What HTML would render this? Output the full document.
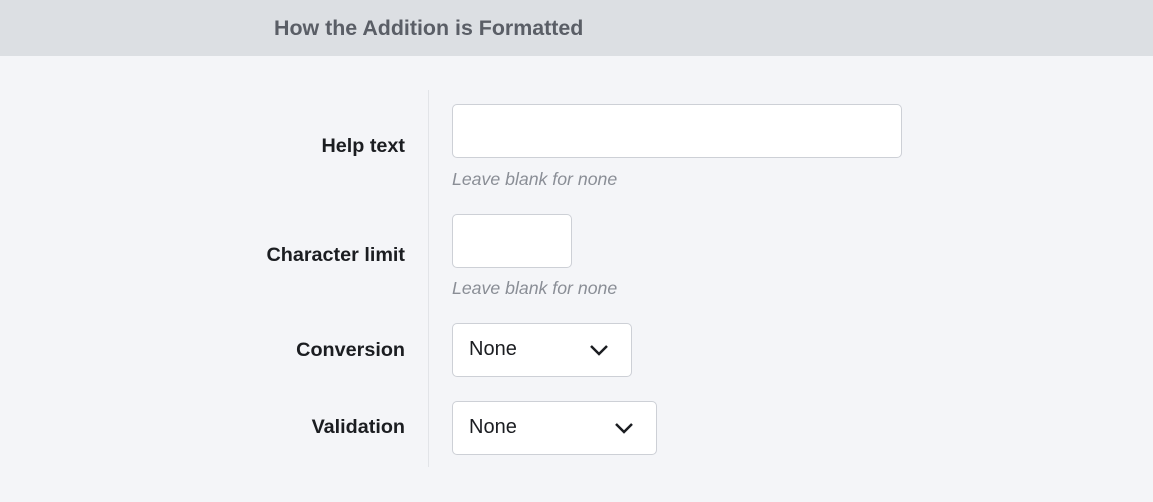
<!DOCTYPE html>
<html><head><style>
body{margin:0;width:1153px;height:502px;background:#f4f5f8;font-family:"Liberation Sans",sans-serif;position:relative;overflow:hidden}
.hdr{position:absolute;left:0;top:0;width:1153px;height:56px;background:#dcdfe3}
.hdr span{position:absolute;left:274px;top:16px;font-size:21.4px;font-weight:bold;color:#5a5e66}
.div{position:absolute;left:428px;top:90px;width:1px;height:377px;background:#e2e4e8}
.lbl{position:absolute;right:748px;font-size:19.8px;font-weight:bold;color:#1b1d21}
.box{position:absolute;background:#fff;border:1px solid #cdd0d6;border-radius:5px;box-sizing:border-box}
.hint{position:absolute;left:452px;font-size:17.7px;font-style:italic;color:#8a8e96}
.sel{font-size:20px;color:#1b1d21}
.sel span{position:absolute;left:16px;top:14px}
.sel svg{position:absolute;top:20px}
</style></head><body>
<div class="hdr"><span>How the Addition is Formatted</span></div>
<div class="div"></div>
<div class="lbl" style="top:135px">Help text</div>
<div class="box" style="left:452px;top:104px;width:450px;height:54px"></div>
<div class="hint" style="top:169px">Leave blank for none</div>
<div class="lbl" style="top:244px">Character limit</div>
<div class="box" style="left:452px;top:214px;width:120px;height:54px"></div>
<div class="hint" style="top:278px">Leave blank for none</div>
<div class="lbl" style="top:339px">Conversion</div>
<div class="box sel" style="left:452px;top:323px;width:180px;height:54px"><span>None</span><svg style="left:136px" width="20" height="12" viewBox="0 0 20 12"><path d="M2 2l8 8 8-8" fill="none" stroke="#1b1d21" stroke-width="2.5"/></svg></div>
<div class="lbl" style="top:416px">Validation</div>
<div class="box sel" style="left:452px;top:401px;width:205px;height:54px"><span>None</span><svg style="left:161px" width="20" height="12" viewBox="0 0 20 12"><path d="M2 2l8 8 8-8" fill="none" stroke="#1b1d21" stroke-width="2.5"/></svg></div>
</body></html>
